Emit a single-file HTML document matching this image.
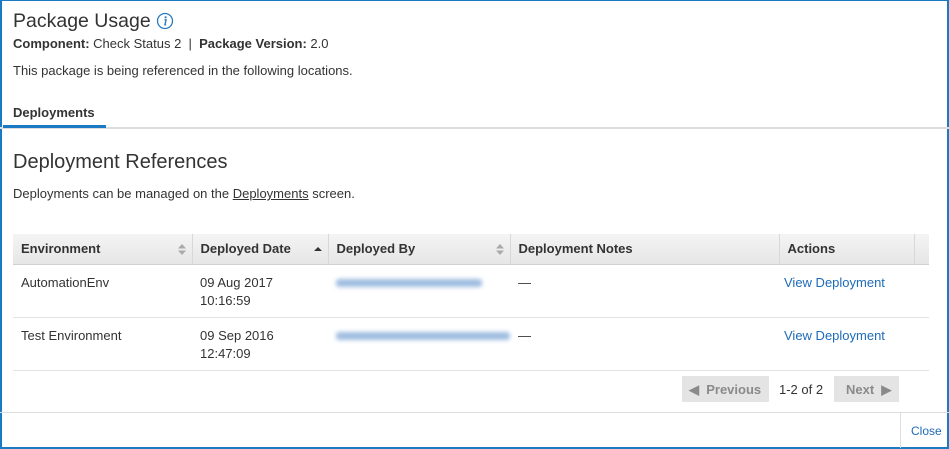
<!DOCTYPE html>
<html><head><style>
*{box-sizing:border-box;margin:0;padding:0}
body{width:949px;height:449px;font-family:"Liberation Sans",sans-serif;color:#333;background:#fff;position:relative;overflow:hidden;font-size:13px}
.frame{position:absolute;left:0;top:0;width:949px;height:449px;border:2px solid #1a7ac4;border-top:1px solid #1a7ac4}
.a{position:absolute;white-space:nowrap}
th,td{text-align:left;vertical-align:top}
table{border-collapse:collapse;position:absolute;left:13px;top:234px;width:916px;table-layout:fixed}
th{height:30px;font-weight:bold;font-size:13px;padding:7px 8px 0;background:linear-gradient(#f4f4f4,#e6e6e6);border-right:1px solid #d8d8d8;border-bottom:1px solid #d0d0d0;position:relative}
td{height:53px;padding:9px 8px 0;border-bottom:1px solid #e2e2e2;line-height:18px}
.blur{display:inline-block;height:8px;background:#9fbde0;filter:blur(2px);margin-top:5px;border-radius:3px}
a{color:#1e6bb8;text-decoration:none}
.sort{position:absolute;right:6px;top:10px;width:8px;height:11px}
.btn{position:absolute;top:376px;height:26px;background:#e4e4e4;color:#8a8a8a;font-weight:bold;font-size:13px;padding-top:6px}
</style></head><body>
<div class="frame"></div>
<div class="a" style="left:13px;top:10px;font-size:19.5px;color:#333">Package Usage</div>
<svg class="a" style="left:156px;top:12px" width="18" height="18" viewBox="0 0 18 18"><circle cx="9" cy="9" r="7.5" fill="none" stroke="#2b7bc0" stroke-width="1.3"/><circle cx="9.6" cy="5.3" r="1.1" fill="#2b7bc0"/><path d="M8.5 7.8h1.5l-1 5h1.1" fill="none" stroke="#2b7bc0" stroke-width="1.4"/></svg>
<div class="a" style="left:13px;top:36px"><b>Component:</b> Check Status 2 &nbsp;|&nbsp; <b>Package Version:</b> 2.0</div>
<div class="a" style="left:13px;top:63px">This package is being referenced in the following locations.</div>
<div class="a" style="left:13px;top:105px;font-weight:bold">Deployments</div>
<div class="a" style="left:0;top:127px;width:949px;height:2px;background:#ddd"></div>
<div class="a" style="left:3px;top:125px;width:103px;height:3px;background:#1a7ac4"></div>
<div class="a" style="left:13px;top:151px;font-size:20px">Deployment References</div>
<div class="a" style="left:13px;top:186px">Deployments can be managed on the <span style="text-decoration:underline;color:#333">Deployments</span> screen.</div>
<table>
<colgroup><col style="width:179px"><col style="width:136px"><col style="width:182px"><col style="width:269px"><col style="width:135px"><col></colgroup>
<tr><th>Environment<svg class="sort" viewBox="0 0 8 11"><path d="M0 4.5L4 0 8 4.5zM0 6.5L4 11 8 6.5z" fill="#aaa"/></svg></th>
<th>Deployed Date<svg class="sort" viewBox="0 0 8 11"><path d="M0 7L4 3 8 7z" fill="#333"/></svg></th>
<th>Deployed By<svg class="sort" viewBox="0 0 8 11"><path d="M0 4.5L4 0 8 4.5zM0 6.5L4 11 8 6.5z" fill="#aaa"/></svg></th>
<th>Deployment Notes</th>
<th>Actions</th><th style="border-right:none"></th></tr>
<tr><td>AutomationEnv</td><td>09 Aug 2017<br>10:16:59</td><td><span class="blur" style="width:146px"></span></td><td>—</td><td colspan="2" style="padding-left:5px"><a>View Deployment</a></td></tr>
<tr><td>Test Environment</td><td>09 Sep 2016<br>12:47:09</td><td><span class="blur" style="width:174px"></span></td><td>—</td><td colspan="2" style="padding-left:5px"><a>View Deployment</a></td></tr>
</table>
<div class="btn" style="left:682px;width:87px;padding-left:7px">◀ &nbsp;Previous</div>
<div class="a" style="left:779px;top:382px">1-2 of 2</div>
<div class="btn" style="left:834px;width:65px;padding-left:12px">Next &nbsp;▶</div>
<div class="a" style="left:0;top:412px;width:949px;height:1px;background:#ddd"></div>
<div class="a" style="left:900px;top:412px;width:1px;height:36px;background:#ddd"></div>
<div class="a" style="left:911px;top:424px;font-size:12px;color:#1e6bb8">Close</div>
</body></html>
